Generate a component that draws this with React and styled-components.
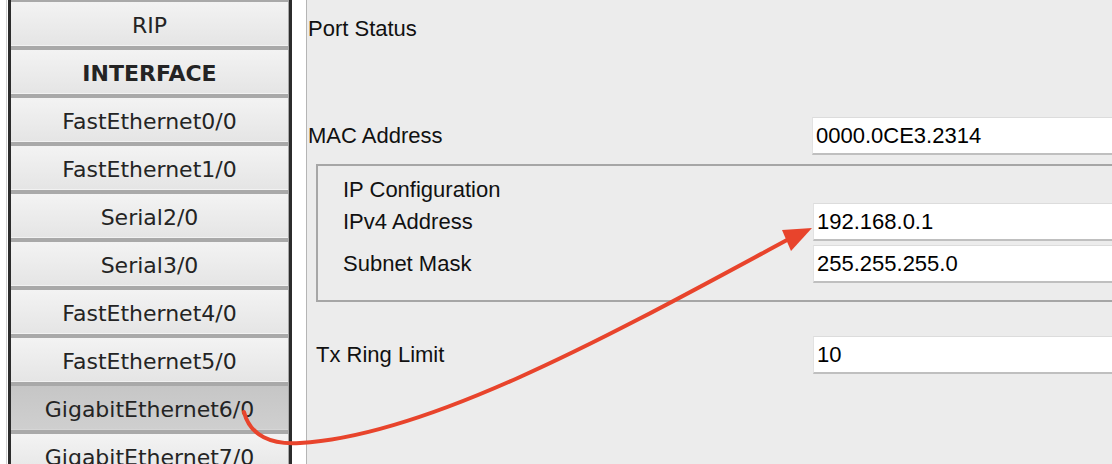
import styled, { createGlobalStyle } from "styled-components";

const GlobalStyle = createGlobalStyle`
  html, body {
    margin: 0;
    padding: 0;
    background: #ffffff;
  }
  * {
    box-sizing: border-box;
  }
`;

const interfaces = [
  { name: "RIP" },
  { name: "INTERFACE", heading: true },
  { name: "FastEthernet0/0" },
  { name: "FastEthernet1/0" },
  { name: "Serial2/0" },
  { name: "Serial3/0" },
  { name: "FastEthernet4/0" },
  { name: "FastEthernet5/0" },
  { name: "GigabitEthernet6/0", selected: true },
  { name: "GigabitEthernet7/0" },
];

export default function App() {
  return (
    <>
      <GlobalStyle />
      <Window>
        <Sidebar>
          <Frame>
            <ButtonList>
              {interfaces.map((item) => (
                <NavButton key={item.name} $heading={item.heading} $selected={item.selected}>
                  {item.name}
                </NavButton>
              ))}
            </ButtonList>
          </Frame>
        </Sidebar>

        <ConfigPanel>
          <StatusRow>Port Status</StatusRow>

          <FieldRow $top={60}>
            <Label $width={504}>MAC Address</Label>
            <TextField defaultValue="0000.0CE3.2314" />
          </FieldRow>

          <Group>
            <GroupTitle>IP Configuration</GroupTitle>
            <FieldRow>
              <Label $width={470}>IPv4 Address</Label>
              <TextField defaultValue="192.168.0.1" />
            </FieldRow>
            <FieldRow $top={4}>
              <Label $width={470}>Subnet Mask</Label>
              <TextField defaultValue="255.255.255.0" />
            </FieldRow>
          </Group>

          <FieldRow $top={34} $indent={8}>
            <Label $width={497}>Tx Ring Limit</Label>
            <TextField defaultValue="10" />
          </FieldRow>
        </ConfigPanel>

        <Arrow width="1112" height="464" viewBox="0 0 1112 464">
          <path
            d="M 244 412 C 250 436, 272 445, 300 443 C 430 436, 620 330, 787 240"
            fill="none"
            stroke="#e8442c"
            strokeWidth="4"
            strokeLinecap="round"
          />
          <polygon points="812,228 791,251 782,230" fill="#e8442c" />
        </Arrow>
      </Window>
    </>
  );
}

const Window = styled.div`
  position: relative;
  display: flex;
  width: 1112px;
  height: 464px;
  overflow: hidden;
`;

const Sidebar = styled.div`
  flex: 0 0 307px;
  display: flex;
  padding-left: 6px;
  padding-right: 14px;
  border-right: 1px solid #b5b5b5;
  background: #ffffff;
`;

const Frame = styled.div`
  display: flex;
  border-left: 1px solid #d2d2d2;
  padding-left: 1px;
`;

const ButtonList = styled.div`
  width: 284px;
  display: flex;
  flex-direction: column;
  gap: 4px;
  padding-top: 2px;
  background: #a9a9a9;
  border-left: 3px solid #2c2c2c;
  border-right: 3px solid #2c2c2c;
`;

const NavButton = styled.div`
  flex: 0 0 44px;
  display: flex;
  align-items: center;
  justify-content: center;
  padding-top: 3px;
  font-family: "DejaVu Sans", Verdana, sans-serif;
  font-size: 22px;
  font-weight: ${(p) => (p.$heading ? 700 : 400)};
  color: #242424;
  white-space: nowrap;
  background: ${(p) =>
    p.$selected
      ? "linear-gradient(#c6c6c6, #cfcfcf)"
      : "linear-gradient(#f3f3f3, #e5e5e5)"};
  border-bottom: 1px solid ${(p) => (p.$selected ? "#d6d6d6" : "#f2f2f2")};
  margin-right: 1px;
`;

const ConfigPanel = styled.div`
  flex: 1;
  display: flex;
  flex-direction: column;
  padding-left: 1px;
  background: #ececec;
  font-family: "Liberation Sans", Arial, sans-serif;
  font-size: 22px;
  color: #111111;
  overflow: hidden;
`;

const StatusRow = styled.div`
  height: 57px;
  display: flex;
  align-items: center;
`;

const FieldRow = styled.div`
  display: flex;
  align-items: center;
  margin-top: ${(p) => p.$top || 0}px;
  margin-left: ${(p) => p.$indent || 0}px;
`;

const Label = styled.div`
  flex: 0 0 ${(p) => p.$width}px;
`;

const TextField = styled.input`
  flex: 0 0 420px;
  height: 38px;
  padding: 0 3px;
  font-family: "Liberation Sans", Arial, sans-serif;
  font-size: 22px;
  color: #000000;
  background: #ffffff;
  border: none;
  border-top: 1px solid #dcdcdc;
  border-left: 1px solid #e2e2e2;
  border-bottom: 2px solid #bfbfbf;
  outline: none;
`;

const Group = styled.div`
  margin-top: 9px;
  margin-left: 8px;
  padding: 11px 0 17px 25px;
  border: 2px solid #a6a6a6;
  border-right: none;
`;

const GroupTitle = styled.div`
  height: 26px;
  display: flex;
  align-items: center;
`;

const Arrow = styled.svg`
  position: absolute;
  left: 0;
  top: 0;
  pointer-events: none;
`;
